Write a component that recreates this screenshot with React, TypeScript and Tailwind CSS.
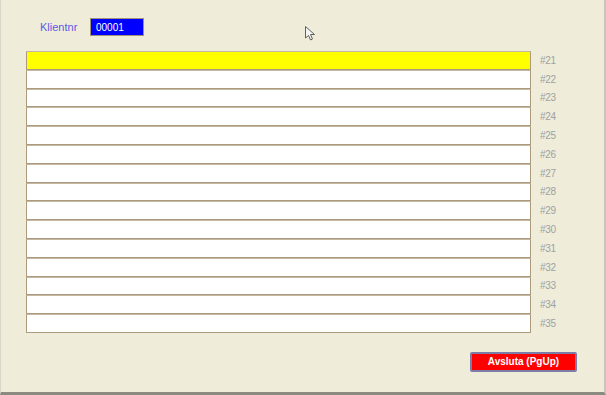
import React from "react";

const rows = Array.from({ length: 15 }, (_, i) => i + 21);

export default function App() {
  return (
    <div
      className="relative w-[606px] h-[395px] bg-[#efedda] border-l border-l-[#d8d6c8] border-r-2 border-r-[#c8c6b8] border-b-[3px] border-b-[#8a8a80] flex flex-col"
      style={{ fontFamily: '"Liberation Sans", Arial, sans-serif' }}
    >
      <div className="flex items-center h-[18px] mt-[18px] ml-[39px]">
        <span className="text-[11px] text-[#5a5ae6] w-[50px]">Klientnr</span>
        <div className="w-[54px] h-[18px] bg-[#0000ff] border border-[#a09478] flex items-center pl-[5px]">
          <span className="text-[10px] text-white">00001</span>
        </div>
      </div>
      <div className="flex flex-col mt-[15px] ml-[25px]">
        {rows.map((n, i) => (
          <div key={n} className="flex items-center h-[18.8px]">
            <div
              className={`w-[505px] h-[18.8px] border border-[#ac9a7c] border-t-[#c4b8a4] ${
                i === 0 ? "bg-[#ffff00]" : "bg-white"
              }`}
            />
            <span className="ml-[9px] text-[10px] text-[#a0a0a0] tracking-[-0.3px]">#{n}</span>
          </div>
        ))}
      </div>
      <div className="flex justify-end mt-[19px] mr-[27px]">
        <button className="w-[107px] h-[20px] bg-[#ff0000] border-2 border-[#7c7ca8] rounded-[2px] text-white text-[10px] font-bold flex items-center justify-center">
          Avsluta (PgUp)
        </button>
      </div>
      <svg
        className="absolute left-[304px] top-[26px]"
        width="12"
        height="16"
        viewBox="0 0 12 16"
      >
        <path
          d="M0.5 0.5 L0.5 12 L3.5 9.5 L5.5 14 L7.5 13 L5.5 8.5 L9.5 8.5 Z"
          fill="#f4f4f4"
          stroke="#606060"
          strokeWidth="1"
        />
      </svg>
    </div>
  );
}
